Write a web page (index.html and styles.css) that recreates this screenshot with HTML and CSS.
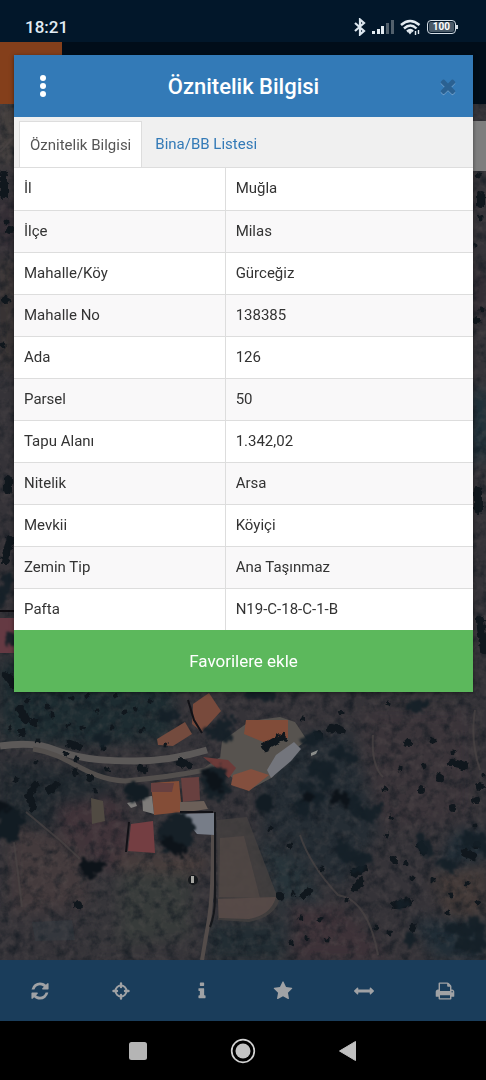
FILE: index.html
```html
<!DOCTYPE html>
<html lang="tr">
<head>
<meta charset="utf-8">
<meta name="viewport" content="width=device-width, initial-scale=1">
<title>Öznitelik Bilgisi</title>
<link rel="stylesheet" href="styles.css">
</head>
<body>
<div class="phone">
  <header class="status">
    <time class="clock">18:21</time>
    <div class="status-icons">
      <svg width="12" height="18" viewBox="0 0 12 18" fill="none" stroke="#dce6ee" stroke-width="2.200"><path d="M1 5l9 8-4 3.500V1.500L10 5l-9 8"/></svg>
      <svg width="22" height="14" viewBox="0 0 22 14"><path fill="#e3ebf1" d="M0 11h3v3H0zM5 9h3v5H5zM9 6h3v8H9z"/><path fill="#52606c" d="M14 3h3v11h-3zM19 0h3v14h-3z"/></svg>
      <svg width="21" height="16" viewBox="0 0 21 16" fill="none" stroke="#e3ebf1" stroke-width="2.400"><path d="M1 6q9-8 18.500 0M4 9.500q6.500-6 12.500 0M7 12.500q3.500-3 6 0"/><path fill="#e3ebf1" stroke="none" d="M8 13l2-1.500 2 1.500-2 2.500z"/><path stroke-width="1.400" d="M15.500 12v4M18.500 11v4"/></svg>
      <span class="battery"><span class="charge">100</span></span>
    </div>
  </header>

  <main class="stage">
    <div class="appbar"><span class="brand"></span></div>
    <div class="map">
      <svg class="aerial" viewBox="0 104 486 856" preserveAspectRatio="xMidYMax slice" aria-hidden="true">
        <defs>
          <filter id="rough" x="-5%" y="-5%" width="110%" height="110%" color-interpolation-filters="sRGB">
            <feTurbulence type="fractalNoise" baseFrequency="0.16" numOctaves="3" seed="4" result="n"/>
            <feDisplacementMap in="SourceGraphic" in2="n" scale="14" xChannelSelector="R" yChannelSelector="G"/>
            <feGaussianBlur stdDeviation="0.8"/>
          </filter>
          <filter id="speck" x="-5%" y="-5%" width="110%" height="110%" color-interpolation-filters="sRGB">
            <feTurbulence type="fractalNoise" baseFrequency="0.2" numOctaves="2" seed="7" result="n"/>
            <feDisplacementMap in="SourceGraphic" in2="n" scale="6" xChannelSelector="R" yChannelSelector="G"/>
            <feGaussianBlur stdDeviation="0.6"/>
          </filter>
          <filter id="edge" color-interpolation-filters="sRGB"><feGaussianBlur stdDeviation="0.7"/></filter>
          <filter id="soft" x="-20%" y="-20%" width="140%" height="140%" color-interpolation-filters="sRGB"><feGaussianBlur stdDeviation="7"/></filter>
          <filter id="grain" x="0" y="0" width="100%" height="100%" color-interpolation-filters="sRGB">
            <feTurbulence type="fractalNoise" baseFrequency="0.09" numOctaves="4" seed="9"/>
            <feColorMatrix values="0 0 0 0 0.06  0 0 0 0 0.09  0 0 0 0 0.12  2.2 0 0 0 -1.000"/>
          </filter>
          <filter id="light" x="0" y="0" width="100%" height="100%" color-interpolation-filters="sRGB">
            <feTurbulence type="fractalNoise" baseFrequency="0.13" numOctaves="3" seed="21"/>
            <feColorMatrix values="0 0 0 0 0.42  0 0 0 0 0.38  0 0 0 0 0.37  0 1.500 0 0 -0.650"/>
          </filter>
        </defs>
        <rect y="104" width="486" height="856" fill="#353338"/>
        <g filter="url(#soft)">
          <path fill="#1d2c31" d="M0 660h180l-10 80-90 5-80-5z"/>
          <path fill="#21292f" d="M0 760l100 10 20 30-70 25-50 10z"/>
          <path fill="#403339" d="M55 805l60-10 20 45-10 40-60-35z"/>
          <path fill="#433a3c" d="M10 820l70 25 10 60-80 10z"/>
          <path fill="#363539" d="M90 870h110l-5 90H80z"/>
          <path fill="#373b3a" d="M120 875l70-10 0 70-70 10z"/>
          <path fill="#493e3c" d="M115 855l95 0-10 20-80-5z"/>
          <path fill="#252d34" d="M260 740l90-10 30 100-40 60-80-60z"/>
          <path fill="#3a3439" d="M360 710h110v110l-90 10z"/>
          <path fill="#423937" d="M430 875l56-10v60l-40-10z"/>
          <path fill="#27343a" d="M255 835l50 30 40 90h-50z"/>
          <path fill="#3d3238" d="M288 900l60 10 40 50h-95z"/>
          <path fill="#202d36" d="M455 830h31v30l-50 10zM410 920h76v40h-50z"/>
          <path fill="#222d33" d="M208 922h78v38h-78z"/>
          <path fill="#4a4440" d="M0 104h14v55L0 170z"/>
          <path fill="#332b33" d="M0 200h14v50H0zM474 270h12v50h-12z"/>
          <path fill="#3a3432" d="M0 260h14v110H0z"/>
          <path fill="#17303a" d="M472 390h14v70h-14z"/>
        </g>
        <rect y="104" width="486" height="856" filter="url(#grain)" opacity=".7"/>
        <rect y="104" width="486" height="856" filter="url(#light)" opacity=".35"/>

        <g filter="url(#edge)">
          <path fill="#454140" opacity=".75" d="M217 820l30-3 32 84q-5 16-30 21l-31-2z"/>
          <path fill="#5a4c49" opacity=".55" d="M220 838l24-2 16 62-41-1z"/>
          <path fill="#5a4c49" opacity=".85" d="M218 899l58-2q-5 18-27 22l-30-1z"/>
          <path fill="#34444b" opacity=".25" d="M32 922l40-2 3 20-40 1z"/>
          <path fill="none" stroke="#5c5958" stroke-width="7" d="M0 746q35-5 55 4c30 11 60 11 80 11q35 0 72-11"/>
          <path fill="none" stroke="#534f4d" stroke-width="5" d="M33 749c38 6 52 30 92 32q45-4 80-11l15-10 40-8"/>
          <path fill="none" stroke="#534c4a" stroke-width="4" d="M213 835q0 60-4 84l-7 41"/>
          <path fill="none" stroke="#15171b" stroke-width="2" d="M215 812v85q0 18-5 30"/>
          <path fill="none" stroke="#4a4444" stroke-width="2" opacity=".7" d="M26 812l36 30 18 17M14 842l8 65M0 152l14-15M300 835q10 30 38 60 30 5 40 60M373 735q-2 30 10 42M475 710q-5 30 5 60"/>
          <path fill="#57534f" d="M222 741l28-20 30-4 15 5 12 18-22 17-12 20-24 13-30-22z"/>
          <path fill="#784a3c" d="M193 704l16-11 12 18-19 21-10-8z"/>
          <path fill="#744b3e" d="M157 739l28-17 7 12-19 12-15-1z"/>
          <path fill="#814c39" d="M246 720h42v18l-20 6-24-10z"/>
          <path fill="#834f3e" d="M233 775l18-6 18 6-20 16-18-6z"/>
          <path fill="#6c3b39" d="M203 757l25 3 8 8-7 10z"/>
          <path fill="#73757c" d="M276 755l18-13 7 7-10 12-20 17-4-8z"/>
          <path fill="#844d37" d="M151 783l28-2 3 31-28 3z"/>
          <path fill="#68403f" d="M151 783h23l-2 9h-21zM181 778l18-1 1 23-17 2z"/>
          <path fill="#7d7b79" d="M142 797l10-1 2 18-11-3zM127 803l8-2 2 5-6 2z"/>
          <path fill="#6b5f58" d="M180 802l24-1 4 8-28 4z"/>
          <path fill="#777d88" d="M180 814l34-1v22l-17-1-9-11z"/>
          <path fill="#743e42" d="M131 824l22-3 2 32-27-2z"/>
          <path stroke="#111116" stroke-width="2" fill="none" d="M129 822l-3 30M188 700l6 20 8 13M180 812h33"/>
          <path fill="#504a42" d="M91 798l12 3 2 20-13 3z"/>
          <circle cx="193" cy="880" r="5" fill="#15181b"/><path fill="#a5a5a0" d="M191 876h3v7h-3z"/>
          <path fill="#653a43" d="M0 618h14v35H0z"/><path stroke="#0d0c10" stroke-width="2" d="M0 611h14"/>
        </g>

        <g filter="url(#speck)" fill="none" stroke="#10171d" stroke-linecap="round">
          <path stroke-width="5" d="M28 700h0M48 707h0M72 698h0M88 696h0M116 695h0M136 709h0M150 701h0M52 715h0M68 725h0M82 728h0M112 727h0M142 730h0M97 711h0M125 712h0M166 745h0M103 748h0M16 779h0M36 762h0M66 754h0M76 759h0M95 790h0M107 769h0M10 728h0M24 731h0M38 741h0M303 719h0M341 713h0M388 704h0M433 740h0M400 768h0M424 766h0M440 775h0M385 789h0M391 817h0M387 836h0M270 828h0M290 846h0M322 869h0M301 918h0M320 920h0M307 938h0M291 943h0M327 940h0M347 901h0M406 863h0M433 880h0M451 895h0M478 902h0M465 768h0M484 775h0M475 826h0M453 752h0M467 884h0M412 878h0M390 933h0M293 893h0M376 928h0M448 913h0M479 175h0M481 218h0M476 245h0M482 310h0M4 190h0M6 222h0M3 345h0"/>
          <path stroke-width="8" d="M20 710l6 10M34 722h0M22 732h0M70 744l8 3M90 778h0M140 768l4 2M75 772h0M180 762l8 3M35 785l-6 10 4 12M50 790l6-5M265 747l18-10M318 735h0M331 728l10 2M408 743h0M421 790h0M440 778h0M453 808h0M476 800h0M304 895l5-4M280 896h0M355 888l5-6M394 860h0M452 763l12 3M480 786h0M420 845l4 6M465 853l8 3M477 845h0M355 873l8-4M78 905h0M395 905l14-3M413 928h0M4 175v20M10 230h0M6 300h0M8 480v10M481 196v8M477 320h0M478 490v20M5 560l5-20M480 620l4 30M6 675l8 10"/>
        </g>
        <g filter="url(#rough)" fill="none" stroke="#10171d" stroke-linecap="round">
          <path stroke="#141f27" stroke-width="12" opacity=".9" d="M163 714l9 2M210 732l18 4M222 728l6-6M308 740l9-2M338 752l14 6M334 755h0M312 770l18-2M322 764l4 18M305 788l12 12M300 806l4 6M344 797l10 6M358 812l14 4M377 808h0M342 846l4 12M352 855l14 4M361 868h0M420 840l8 12M466 838l14 2M484 850h0M442 862l8 4M450 928l16 4M474 922l8 18M460 944l16 4M402 905h0M410 940h0M413 706h8M250 692l20 3M0 600l8-20M10 640h0M98 739h8"/>
          <path stroke="#121c23" stroke-width="19" d="M5 812l10 6M4 831l8 0M134 791l5 2M265 804h0"/>
          <path stroke="#162027" stroke-width="25" d="M171 831l11-5M174 842l6-2M214 778l3 10"/>
          <path stroke="#0d1319" stroke-width="12" d="M336 797l9 3M166 842l15 8M86 866l12 0M90 873h0M3 808h0M210 776l8 10M308 798h0"/>
        </g>
        <path fill="#8b8d8a" d="M311 753l7-3-2 4-5 2z"/>
      </svg>
      <span class="map-tool"></span>
    </div>
    <nav class="toolbar" aria-label="Harita araçları">
      <button type="button" aria-label="Yenile"><svg class="icon" viewBox="0 0 1792 1792"><path transform="translate(128 128)" d="M1511 928q0 5-1 7-64 268-268 434.500t-478 166.500q-146 0-282.500-55t-243.500-157l-129 129q-19 19-45 19t-45-19-19-45v-448q0-26 19-45t45-19h448q26 0 45 19t19 45-19 45l-137 137q71 66 161 102t187 36q134 0 250-65t186-179q11-17 53-117 8-23 30-23h192q13 0 22.500 9.500t9.500 22.500zm25-800v448q0 26-19 45t-45 19h-448q-26 0-45-19t-19-45 19-45l138-138q-148-137-349-137-134 0-250 65t-186 179q-11 17-53 117-8 23-30 23h-199q-13 0-22.500-9.500t-9.500-22.500v-7q65-268 270-434.500t480-166.500q146 0 284 55.500t245 156.500l130-129q19-19 45-19t45 19 19 45z"/></svg></button>
      <button type="button" aria-label="Konum"><svg class="icon" viewBox="0 0 20 20"><circle cx="10" cy="10" r="5.500" fill="none" stroke="currentColor" stroke-width="2"/><path stroke="currentColor" stroke-width="2.400" stroke-linecap="round" d="M10 2.500v3.500M10 14v3.500M2.500 10h3.500M14 10h3.500"/></svg></button>
      <button type="button" aria-label="Bilgi"><svg class="icon" viewBox="0 0 1792 1792"><path d="M1216 1344v128q0 26-19 45t-45 19h-512q-26 0-45-19t-19-45v-128q0-26 19-45t45-19h64v-384h-64q-26 0-45-19t-19-45v-128q0-26 19-45t45-19h384q26 0 45 19t19 45v576h64q26 0 45 19t19 45zm-128-1152v192q0 26-19 45t-45 19h-256q-26 0-45-19t-19-45v-192q0-26 19-45t45-19h256q26 0 45 19t19 45z"/></svg></button>
      <button type="button" aria-label="Favoriler"><svg class="icon" viewBox="-64 0 1792 1792"><path d="M1664 647q0 22-26 48l-363 354 86 500q1 7 1 20 0 21-10.500 35.500t-30.500 14.500q-19 0-40-12l-449-236-449 236q-22 12-40 12-21 0-31.500-14.500t-10.500-35.500q0-6 2-20l86-500-364-354q-25-27-25-48 0-37 56-46l502-73 225-455q19-41 49-41t49 41l225 455 502 73q56 9 56 46z"/></svg></button>
      <button type="button" aria-label="Ölçüm"><svg class="icon" viewBox="0 0 1792 1792"><path d="M1792 896q0 26-19 45l-256 256q-19 19-45 19t-45-19-19-45v-128h-1024v128q0 26-19 45t-45 19-45-19l-256-256q-19-19-19-45t19-45l256-256q19-19 45-19t45 19 19 45v128h1024v-128q0-26 19-45t45-19 45 19l256 256q19 19 19 45z"/></svg></button>
      <button type="button" aria-label="Yazdır"><svg class="icon" viewBox="0 0 1792 1792"><path d="M448 1536h896v-256h-896v256zm0-640h896v-384h-160q-40 0-68-28t-28-68v-160h-640v640zm1152 64q0-26-19-45t-45-19-45 19-19 45 19 45 45 19 45-19 19-45zm128 0v416q0 13-9.500 22.500t-22.500 9.500h-224v160q0 40-28 68t-68 28h-960q-40 0-68-28t-28-68v-160h-224q-13 0-22.500-9.500t-9.500-22.500v-416q0-79 56.500-135.500t135.500-56.500h64v-544q0-40 28-68t68-28h672q40 0 88 20t76 48l152 152q28 28 48 76t20 88v256h64q79 0 135.500 56.500t56.500 135.500z"/></svg></button>
    </nav>

    <section class="modal" role="dialog" aria-labelledby="modal-title">
      <header class="modal-head">
        <button type="button" class="head-button" aria-label="Menü"><svg width="6" height="22" viewBox="0 0 6 22" fill="#fff"><circle cx="3" cy="3" r="3"/><circle cx="3" cy="11" r="3"/><circle cx="3" cy="19" r="3"/></svg></button>
        <h1 id="modal-title">Öznitelik Bilgisi</h1>
        <button type="button" class="head-button close" aria-label="Kapat"><svg width="22" height="22" viewBox="0 0 1792 1792"><path fill="#6a9bc7" transform="translate(0 90)" d="M1490 1322q0 40-28 68l-136 136q-28 28-68 28t-68-28l-294-294-294 294q-28 28-68 28t-68-28l-136-136q-28-28-28-68t28-68l294-294-294-294q-28-28-28-68t28-68l136-136q28-28 68-28t68 28l294 294 294-294q28-28 68-28t68 28l136 136q28 28 28 68t-28 68l-294 294 294 294q28 28 28 68z"/><path fill="#2a6192" d="M1490 1322q0 40-28 68l-136 136q-28 28-68 28t-68-28l-294-294-294 294q-28 28-68 28t-68-28l-136-136q-28-28-28-68t28-68l294-294-294-294q-28-28-28-68t28-68l136-136q28-28 68-28t68 28l294 294 294-294q28-28 68-28t68 28l136 136q28 28 28 68t-28 68l-294 294 294 294q28 28 28 68z"/></svg></button>
      </header>
      <div class="tabs" role="tablist">
        <button type="button" class="tab active" role="tab" aria-selected="true">Öznitelik Bilgisi</button>
        <button type="button" class="tab" role="tab" aria-selected="false">Bina/BB Listesi</button>
      </div>
      <table class="attributes">
        <tbody>
          <tr><th scope="row">İl</th><td>Muğla</td></tr>
          <tr><th scope="row">İlçe</th><td>Milas</td></tr>
          <tr><th scope="row">Mahalle/Köy</th><td>Gürceğiz</td></tr>
          <tr><th scope="row">Mahalle No</th><td>138385</td></tr>
          <tr><th scope="row">Ada</th><td>126</td></tr>
          <tr><th scope="row">Parsel</th><td>50</td></tr>
          <tr><th scope="row">Tapu Alanı</th><td>1.342,02</td></tr>
          <tr><th scope="row">Nitelik</th><td>Arsa</td></tr>
          <tr><th scope="row">Mevkii</th><td>Köyiçi</td></tr>
          <tr><th scope="row">Zemin Tip</th><td>Ana Taşınmaz</td></tr>
          <tr><th scope="row">Pafta</th><td>N19-C-18-C-1-B</td></tr>
        </tbody>
      </table>
      <button type="button" class="favorite">Favorilere ekle</button>
    </section>
  </main>

  <nav class="system-nav" aria-label="Sistem">
    <button type="button" aria-label="Son uygulamalar"><svg width="26" height="26" viewBox="0 0 26 26"><rect x="4" y="4" width="18" height="18" rx="2.500" fill="#b5b5b5"/></svg></button>
    <button type="button" aria-label="Ana ekran"><svg width="26" height="26" viewBox="0 0 26 26"><circle cx="13" cy="13" r="11.300" fill="none" stroke="#d2d2d2" stroke-width="1.700"/><circle cx="13" cy="13" r="7.500" fill="#c4c4c4"/></svg></button>
    <button type="button" aria-label="Geri"><svg width="26" height="26" viewBox="0 0 26 26"><path d="M4.500 13L20.500 3.500v19z" fill="#c0c0c0" stroke="#c0c0c0" stroke-linejoin="round"/></svg></button>
  </nav>
</div>
</body>
</html>
```

FILE: styles.css
```css
* { box-sizing: border-box; }

body {
  margin: 0;
  background: #000;
  font-family: Roboto, "Liberation Sans", sans-serif;
  color: #333;
}

button {
  margin: 0;
  padding: 0;
  border: 0;
  background: none;
  font: inherit;
  color: inherit;
}

svg { display: block; }

.phone {
  display: flex;
  flex-direction: column;
  min-height: 100vh;
}

.status {
  display: flex;
  align-items: center;
  justify-content: space-between;
  height: 42px;
  padding: 12px 30px 0 25px;
  background: #02172a;
}

.clock {
  font-size: 17px;
  font-weight: 500;
  color: #e3edf5;
}

.status-icons {
  display: flex;
  align-items: center;
  gap: 6px;
}

.battery {
  position: relative;
  padding: 1px;
  border: 1px solid #d5dee6;
  border-radius: 4px;
}

.battery::after {
  content: "";
  position: absolute;
  top: 4px;
  right: -3px;
  width: 2px;
  height: 4px;
  background: #d5dee6;
}

.charge {
  display: block;
  padding: 0 4px;
  border-radius: 2px;
  background: #4a5a68;
  color: #fff;
  font-size: 10px;
  font-weight: 700;
  line-height: 10px;
}

.stage {
  position: relative;
  display: flex;
  flex: 1;
  flex-direction: column;
}

.appbar {
  display: flex;
  height: 62px;
  background: #010d19;
}

.brand {
  width: 62px;
  background: #843f1b;
}

.map {
  position: relative;
  flex: 1;
  min-height: 640px;
  background: #353338;
}

.aerial {
  position: absolute;
  inset: 0;
  width: 100%;
  height: 100%;
}

.map-tool {
  position: absolute;
  top: 17px;
  right: 0;
  width: 40px;
  height: 50px;
  background: #7e7e7e;
}

.toolbar {
  display: grid;
  grid-template-columns: repeat(6, 1fr);
  height: 61px;
  background: #1a3d5b;
  color: #a0a2a5;
}

.toolbar button {
  display: grid;
  place-items: center;
  padding-right: 2px;
}

.icon {
  width: 20px;
  height: 20px;
  fill: currentColor;
}

.modal {
  position: absolute;
  top: 13px;
  right: 13px;
  left: 14px;
  background: #fff;
  box-shadow: 0 1px 4px rgba(0, 0, 0, .5);
}

.modal-head {
  display: flex;
  align-items: center;
  justify-content: space-between;
  height: 62px;
  padding: 0 5px;
  background: #337ab7;
}

.modal-head h1 {
  margin: 0;
  color: #fff;
  font-size: 22px;
  font-weight: 500;
}

.head-button {
  display: grid;
  place-items: center;
  width: 48px;
  height: 48px;
}

.close { padding-left: 8px; }

.tabs {
  display: flex;
  height: 51px;
  padding: 4px 5px 0;
  border-bottom: 1px solid #ddd;
  background: #f0f0f0;
}

.tab {
  padding: 0 13px;
  font-size: 15px;
  color: #337ab7;
}

.tab.active {
  padding: 0 10px;
  border: 1px solid #ddd;
  border-width: 1px 1px 0 1px;
  background: #fff;
  color: #555;
}

.attributes {
  width: 100%;
  border-collapse: collapse;
  font-size: 15px;
  line-height: 21px;
}

.attributes th,
.attributes td {
  height: 42px;
  padding: 10px;
  border-bottom: 1px solid #ddd;
  font-weight: 400;
  text-align: left;
}

.attributes th {
  width: 46%;
  border-right: 1px solid #ddd;
}

.attributes tr:nth-child(even) { background: #f9f8f9; }

.attributes tr:last-child > * { border-bottom: 0; }

.favorite {
  display: block;
  width: 100%;
  height: 62px;
  background: #5cb85c;
  color: #fff;
  font-size: 17px;
}

.system-nav {
  display: flex;
  align-items: center;
  justify-content: center;
  gap: 79px;
  height: 59px;
  background: #000;
}
```
